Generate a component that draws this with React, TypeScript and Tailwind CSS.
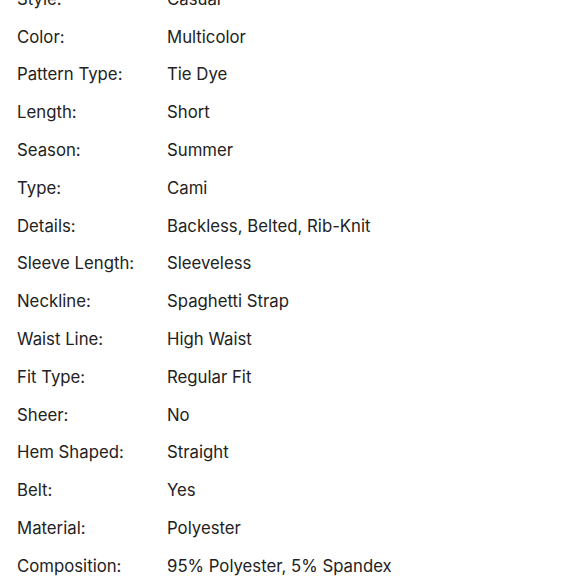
const rows: [string, string][] = [
  ["Style:", "Casual"],
  ["Color:", "Multicolor"],
  ["Pattern Type:", "Tie Dye"],
  ["Length:", "Short"],
  ["Season:", "Summer"],
  ["Type:", "Cami"],
  ["Details:", "Backless, Belted, Rib-Knit"],
  ["Sleeve Length:", "Sleeveless"],
  ["Neckline:", "Spaghetti Strap"],
  ["Waist Line:", "High Waist"],
  ["Fit Type:", "Regular Fit"],
  ["Sheer:", "No"],
  ["Hem Shaped:", "Straight"],
  ["Belt:", "Yes"],
  ["Material:", "Polyester"],
  ["Composition:", "95% Polyester, 5% Spandex"],
];

export default function App() {
  return (
    <div className="w-[580px] h-[580px] overflow-hidden bg-white font-['Inter',sans-serif] text-[16.75px] text-[#222]">
      <div className="-mt-[19.5px] pl-[17px] flex flex-col">
        {rows.map(([label, value]) => (
          <div key={label} className="grid grid-cols-[150px_1fr] h-[37.8px] items-center">
            <span>{label}</span>
            <span>{value}</span>
          </div>
        ))}
      </div>
    </div>
  );
}
